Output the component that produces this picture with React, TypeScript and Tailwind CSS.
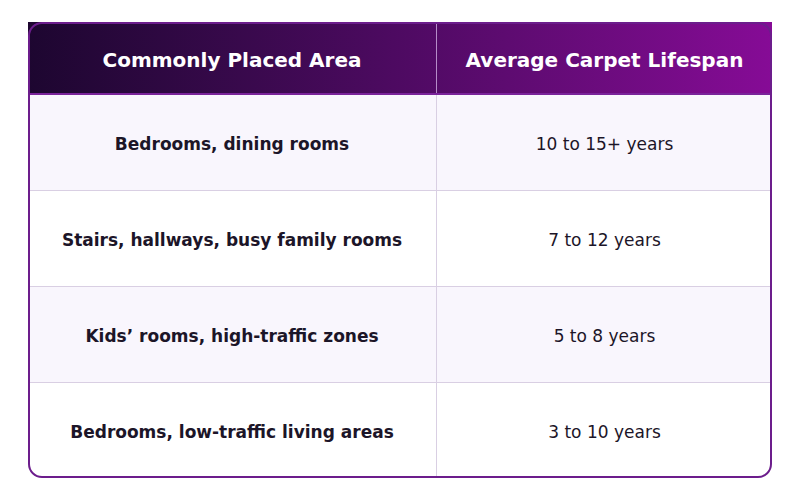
import React from 'react';

const rows = [
  { area: 'Bedrooms, dining rooms', life: '10 to 15+ years' },
  { area: 'Stairs, hallways, busy family rooms', life: '7 to 12 years' },
  { area: 'Kids\u2019 rooms, high-traffic zones', life: '5 to 8 years' },
  { area: 'Bedrooms, low-traffic living areas', life: '3 to 10 years' },
];

export default function App() {
  return (
    <div className="w-[800px] h-[500px] bg-white pt-[22px] px-[28px] font-['DejaVu_Sans',sans-serif]">
      <div className="relative w-[744px]">
        <div className="flex h-[73px] bg-gradient-to-r from-[#1d0630] via-[#4e0a62] to-[#860b96] border-b-2 border-[#7a239a]">
          <div className="w-[409px] flex items-center justify-center pt-[5px] border-r border-[#b58cc8] text-white font-bold text-[20px]">
            Commonly Placed Area
          </div>
          <div className="flex-1 flex items-center justify-center pt-[5px] text-white font-bold text-[20px]">
            Average Carpet Lifespan
          </div>
        </div>
        {rows.map((r, i) => (
          <div
            key={i}
            className={`flex ${i === 0 ? 'h-[95px]' : 'h-[96px] border-t border-[#d9cfe3]'} ${i % 2 === 0 ? 'bg-[#f9f6fd]' : 'bg-white'}`}
          >
            <div className="w-[409px] flex items-center justify-center pt-[5px] border-r border-[#d9cfe3] text-[#1c1528] font-bold text-[17px]">
              {r.area}
            </div>
            <div className="flex-1 flex items-center justify-center pt-[5px] text-[#1c1528] text-[17px]">
              {r.life}
            </div>
          </div>
        ))}
        <div className="absolute inset-0 border-2 border-[#6c1d8c] rounded-[14px] pointer-events-none" />
      </div>
    </div>
  );
}
